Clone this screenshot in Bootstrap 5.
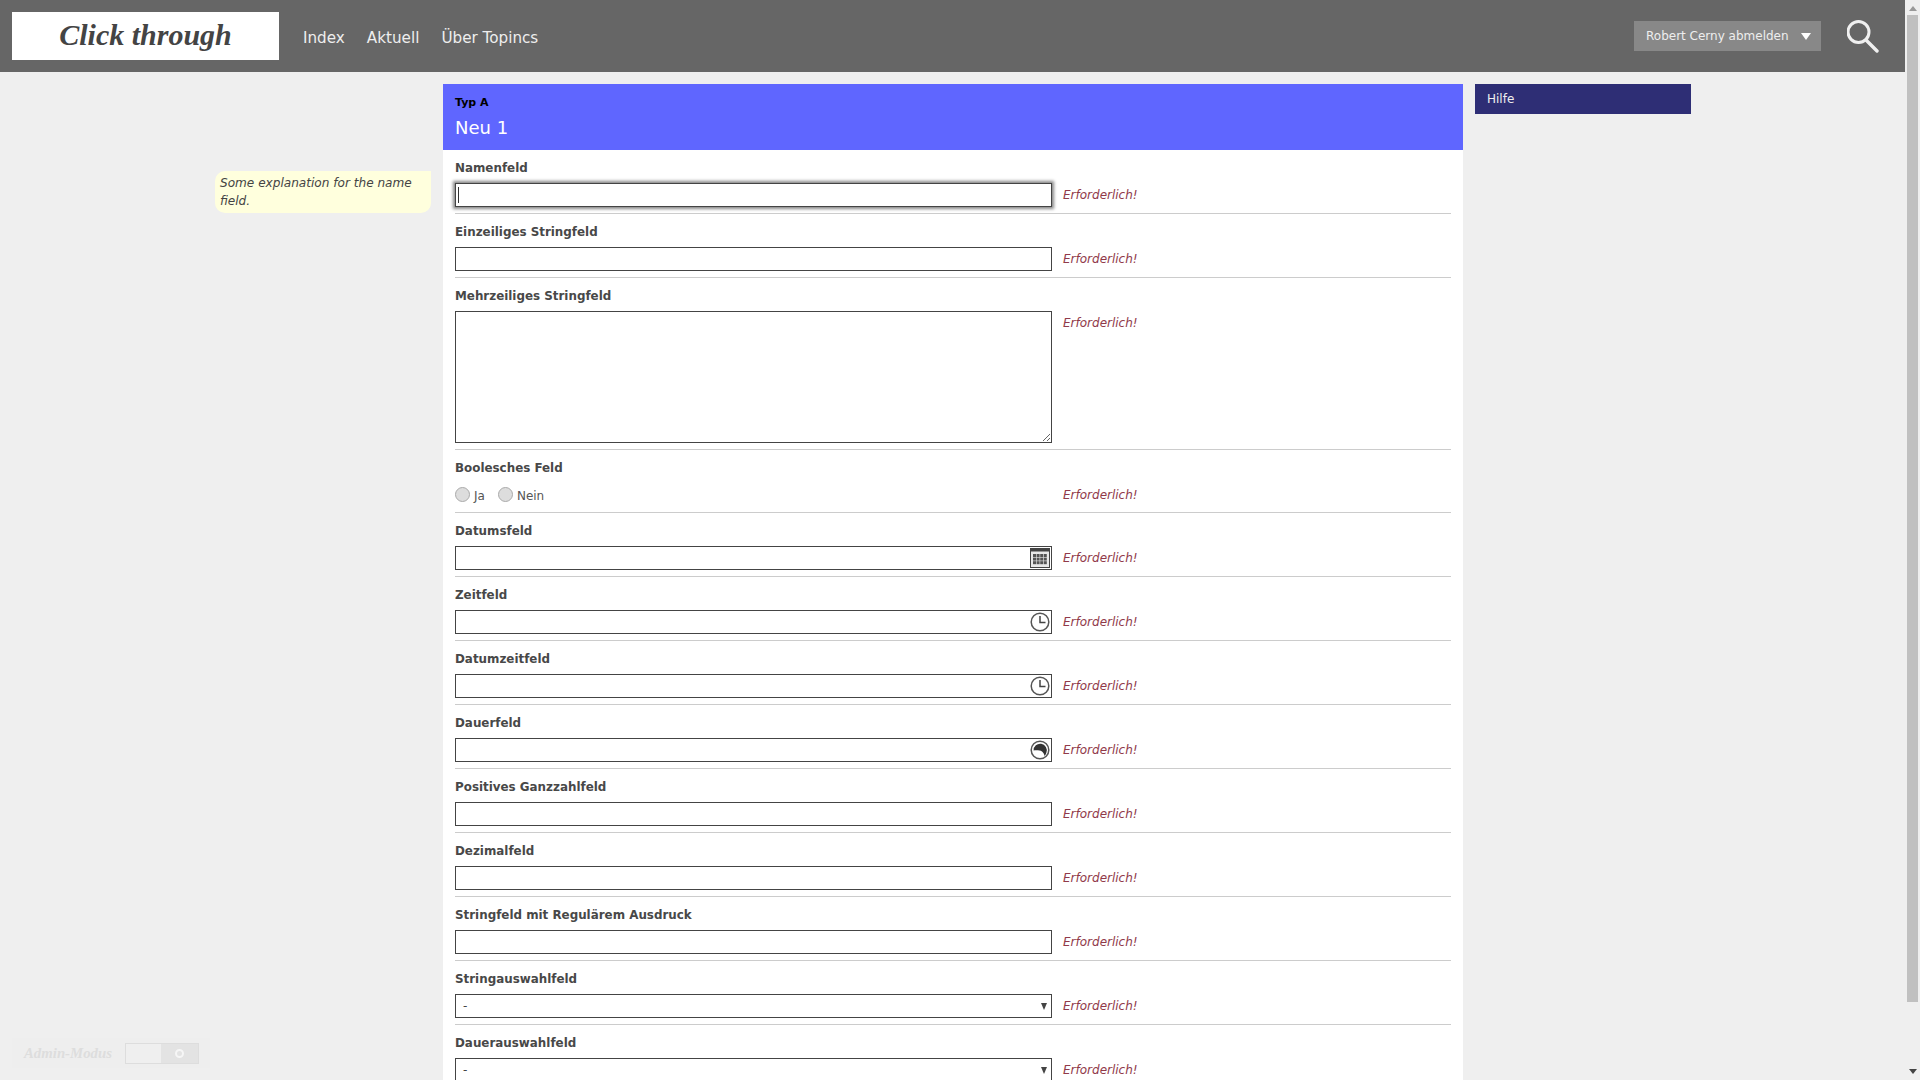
<!DOCTYPE html>
<html lang="de">
<head>
<meta charset="utf-8">
<title>Neu 1</title>
<link href="https://cdn.jsdelivr.net/npm/bootstrap@5.3.0/dist/css/bootstrap.min.css" rel="stylesheet">
<style>
html,body{height:100%;overflow:hidden}
body{background:#efefef;font-family:"DejaVu Sans",Verdana,sans-serif;color:#444;font-size:12px;line-height:18px}
.page-main{flex:1 1 auto;min-width:0;height:100vh;overflow:hidden}
.top-bar{background:#666;height:72px;padding:12px 26px 12px 12px}
.logo-box{background:#fff;width:267px;height:48px;font-family:"Liberation Serif",Georgia,serif;font-style:italic;font-weight:700;font-size:30px;color:#444;line-height:46px;text-align:center}
.top-nav{margin-left:24px;gap:22px;padding-top:14px}
.top-nav a{color:#eee;text-decoration:none;font-size:15.2px;line-height:24px}
.logout-btn{background:#888;color:#eee;height:30px;width:187px;border:0;border-radius:0;padding:0 10px 0 12px;font-size:12px;margin:9px 24px 0 auto}
.logout-btn:hover{background:#888;color:#eee}
.search-ico{flex:none;margin:7px 0 0 2px}
.tri-down{width:0;height:0;border-left:5.5px solid transparent;border-right:5.5px solid transparent;border-top:7px solid #fff}
.content-wrap{padding:12px 0 0 215px;gap:12px}
.note-col{width:216px;padding-top:87px;flex:none}
.field-note{background:#ffd;border-radius:10px 0 10px 10px;padding:3px 5px;font-style:italic;font-size:12.1px;line-height:18px;height:42px}
.form-panel{width:1020px;flex:none;background:#fff}
.panel-head{background:#5f66ff;height:66px;padding:10px 12px 0}
.type-name{color:#000;font-weight:700;font-size:11px;line-height:18px}
.item-name{color:#fff;font-size:18px;line-height:26px;margin-top:3px}
.panel-body-x{padding:0 12px}
.field-row{border-bottom:1px solid #ccc;padding-bottom:6px;margin-right:0}
.field-label{font-weight:700;font-size:11.9px;line-height:18px;padding-top:9px;height:33px;color:#484848;margin:0;display:block}
.field-ctrl{width:597px;flex:none;position:relative}
.form-control.plain-in,.form-select.plain-in{height:24px;min-height:24px;border:1px solid #444;border-radius:0;padding:1px 7px;font-size:12px;line-height:18px;color:#444;background-image:none;box-shadow:none;font-family:inherit}
textarea.form-control.plain-in{height:132px;resize:both;display:block}
.form-control.plain-in.is-active{box-shadow:0 0 3px 2px #888}
.caret-bar{position:absolute;left:3px;top:4px;width:1px;height:16px;background:#333}
.ctrl-icon{position:absolute;right:2px;top:2px;width:20px;height:20px;display:block}
.sel-arrow{position:absolute;right:5px;top:9px;width:0;height:0;border-left:3.5px solid transparent;border-right:3.5px solid transparent;border-top:7px solid #444}
.err-msg{margin-left:11px;color:#903a4a;font-style:italic;font-size:12px;line-height:24px}
.err-short{line-height:24px;height:23px}
.radio-line{height:23px;font-size:12px;gap:13px;color:#555;padding-top:2px}
.radio-dot{width:15px;height:15px;border-radius:50%;border:1px solid #aaa;background:#ddd;display:inline-block;margin-right:4px;margin-top:-2px;flex:none}
.help-col{width:216px;flex:none}
.help-bar{background:#2e2e75;color:#eee;height:30px;padding:0 12px;line-height:30px;font-size:12px}
.fake-scroll{width:15px;flex:none;background:#efefef;height:100vh}
.scroll-thumb{width:11px;background:#c0c0c0;height:987px;margin:0 auto}
.arr-up{width:0;height:0;border-left:4px solid transparent;border-right:4px solid transparent;border-bottom:5px solid #999;margin:6px auto 4px}
.arr-down{width:0;height:0;border-left:4px solid transparent;border-right:4px solid transparent;border-top:5px solid #444;margin:auto auto 6px}
.admin-box{position:fixed;left:12px;bottom:12px;width:198px;height:30px;background:#eee;padding:0 12px;color:#ddd;font-family:"Liberation Serif",Georgia,serif;font-style:italic;font-weight:700;font-size:14.8px;white-space:nowrap}
.admin-toggle{margin-left:13px;width:74px;height:21px;border:1px solid #ddd;background:#efefef;flex:none}
.admin-knob{width:37px;background:#e3e3e3;margin-left:auto}
.knob-ring{width:9px;height:9px;border-radius:50%;border:2px solid #f6f6f6;background:#e3e3e3}
</style>
</head>
<body>
<div class="d-flex">
<div class="page-main">
  <header class="top-bar d-flex align-items-start">
    <div class="logo-box">Click through</div>
    <nav class="top-nav d-flex">
      <a href="#">Index</a><a href="#">Aktuell</a><a href="#">Über Topincs</a>
    </nav>
    <button type="button" class="btn logout-btn d-flex align-items-center justify-content-between"><span>Robert Cerny abmelden</span><span class="tri-down"></span></button>
    <svg width="32" height="34" viewBox="2 0 32 34" class="search-ico" aria-label="Suche"><circle cx="13.5" cy="13" r="10.5" fill="none" stroke="#f0f0f0" stroke-width="3"/><path d="M21 21 L32 32" stroke="#f0f0f0" stroke-width="3.4" stroke-linecap="round"/></svg>
  </header>
  <div class="content-wrap d-flex align-items-start">
    <aside class="note-col"><div class="field-note">Some explanation for the name field.</div></aside>
    <main class="form-panel">
      <div class="panel-head">
        <div class="type-name">Typ A</div>
        <div class="item-name">Neu 1</div>
      </div>
      <div class="panel-body-x">
        <div class="field-row">
          <label class="field-label">Namenfeld</label>
          <div class="d-flex"><div class="field-ctrl"><input class="form-control plain-in is-active" type="text"><span class="caret-bar"></span></div><span class="err-msg">Erforderlich!</span></div>
        </div>
        <div class="field-row">
          <label class="field-label">Einzeiliges Stringfeld</label>
          <div class="d-flex"><div class="field-ctrl"><input class="form-control plain-in" type="text"></div><span class="err-msg">Erforderlich!</span></div>
        </div>
        <div class="field-row">
          <label class="field-label">Mehrzeiliges Stringfeld</label>
          <div class="d-flex"><div class="field-ctrl"><textarea class="form-control plain-in"></textarea></div><span class="err-msg">Erforderlich!</span></div>
        </div>
        <div class="field-row">
          <label class="field-label">Boolesches Feld</label>
          <div class="d-flex"><div class="field-ctrl radio-line d-flex align-items-center"><span class="d-inline-flex align-items-center"><span class="radio-dot"></span>Ja</span><span class="d-inline-flex align-items-center"><span class="radio-dot"></span>Nein</span></div><span class="err-msg err-short">Erforderlich!</span></div>
        </div>
        <div class="field-row">
          <label class="field-label">Datumsfeld</label>
          <div class="d-flex"><div class="field-ctrl"><input class="form-control plain-in" type="text">
            <svg class="ctrl-icon" viewBox="0 0 20 20"><rect width="20" height="20" fill="#444"/><rect x="1" y="3.5" width="18" height="15.5" fill="#e8e8e8"/><g fill="#555"><rect x="3" y="6" width="3" height="3"/><rect x="6.6" y="6" width="3" height="3"/><rect x="10.2" y="6" width="3" height="3"/><rect x="13.8" y="6" width="3" height="3"/><rect x="3" y="9.6" width="3" height="3"/><rect x="6.6" y="9.6" width="3" height="3"/><rect x="10.2" y="9.6" width="3" height="3"/><rect x="13.8" y="9.6" width="3" height="3"/><rect x="3" y="13.2" width="3" height="3"/><rect x="6.6" y="13.2" width="3" height="3"/><rect x="10.2" y="13.2" width="3" height="3"/><rect x="13.8" y="13.2" width="3" height="3"/></g></svg>
          </div><span class="err-msg">Erforderlich!</span></div>
        </div>
        <div class="field-row">
          <label class="field-label">Zeitfeld</label>
          <div class="d-flex"><div class="field-ctrl"><input class="form-control plain-in" type="text">
            <svg class="ctrl-icon" viewBox="0 0 20 20"><circle cx="10" cy="10" r="8.8" fill="#fff" stroke="#555" stroke-width="1.5"/><path d="M10 4V10.5H15.5" fill="none" stroke="#444" stroke-width="1.5"/></svg>
          </div><span class="err-msg">Erforderlich!</span></div>
        </div>
        <div class="field-row">
          <label class="field-label">Datumzeitfeld</label>
          <div class="d-flex"><div class="field-ctrl"><input class="form-control plain-in" type="text">
            <svg class="ctrl-icon" viewBox="0 0 20 20"><circle cx="10" cy="10" r="8.8" fill="#fff" stroke="#555" stroke-width="1.5"/><path d="M10 4V10.5H15.5" fill="none" stroke="#444" stroke-width="1.5"/></svg>
          </div><span class="err-msg">Erforderlich!</span></div>
        </div>
        <div class="field-row">
          <label class="field-label">Dauerfeld</label>
          <div class="d-flex"><div class="field-ctrl"><input class="form-control plain-in" type="text">
            <svg class="ctrl-icon" viewBox="0 0 20 20"><circle cx="10" cy="10" r="8.8" fill="#fff" stroke="#555" stroke-width="1.5"/><path d="M3.6 10.5A6.6 6.6 0 1 1 16.4 12.5C16 14 15.4 15.3 14.6 16C14.2 14.4 13.5 12.5 12 11.5C10 10.3 6.5 10.2 3.6 10.5Z" fill="#333"/></svg>
          </div><span class="err-msg">Erforderlich!</span></div>
        </div>
        <div class="field-row">
          <label class="field-label">Positives Ganzzahlfeld</label>
          <div class="d-flex"><div class="field-ctrl"><input class="form-control plain-in" type="text"></div><span class="err-msg">Erforderlich!</span></div>
        </div>
        <div class="field-row">
          <label class="field-label">Dezimalfeld</label>
          <div class="d-flex"><div class="field-ctrl"><input class="form-control plain-in" type="text"></div><span class="err-msg">Erforderlich!</span></div>
        </div>
        <div class="field-row">
          <label class="field-label">Stringfeld mit Regulärem Ausdruck</label>
          <div class="d-flex"><div class="field-ctrl"><input class="form-control plain-in" type="text"></div><span class="err-msg">Erforderlich!</span></div>
        </div>
        <div class="field-row">
          <label class="field-label">Stringauswahlfeld</label>
          <div class="d-flex"><div class="field-ctrl"><select class="form-select plain-in"><option>-</option></select><span class="sel-arrow"></span></div><span class="err-msg">Erforderlich!</span></div>
        </div>
        <div class="field-row">
          <label class="field-label">Dauerauswahlfeld</label>
          <div class="d-flex"><div class="field-ctrl"><select class="form-select plain-in"><option>-</option></select><span class="sel-arrow"></span></div><span class="err-msg">Erforderlich!</span></div>
        </div>
      </div>
    </main>
    <aside class="help-col"><div class="help-bar">Hilfe</div></aside>
  </div>
</div>
<div class="fake-scroll d-flex flex-column"><div class="arr-up"></div><div class="scroll-thumb"></div><div class="arr-down"></div></div>
</div>
<div class="admin-box d-flex align-items-center"><span>Admin-Modus</span><div class="admin-toggle d-flex"><div class="admin-knob d-flex align-items-center justify-content-center"><span class="knob-ring"></span></div></div></div>
</body>
</html>
